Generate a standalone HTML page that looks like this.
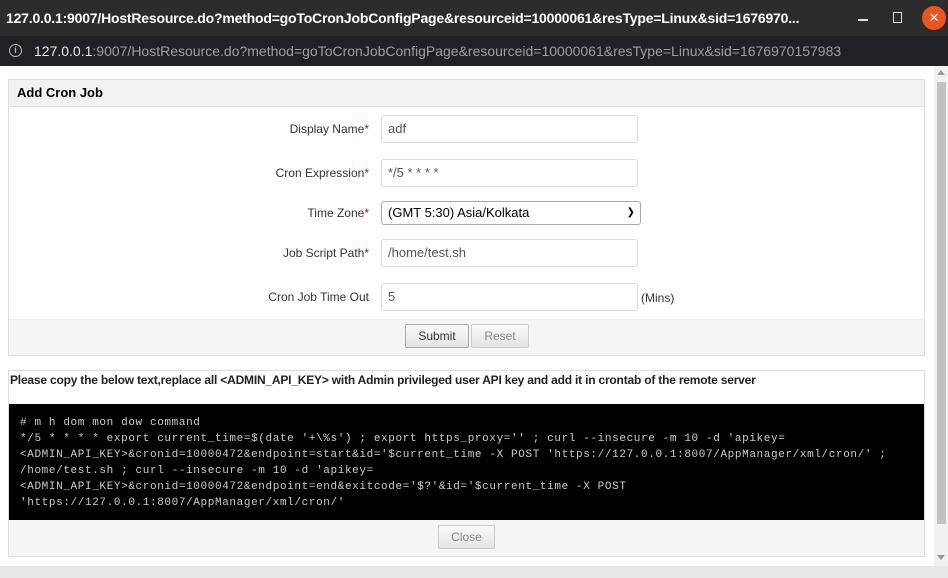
<!DOCTYPE html><html><head><style>
*{box-sizing:border-box;margin:0;padding:0}
body{width:948px;height:578px;overflow:hidden;background:#e8e8e8;font-family:"Liberation Sans",sans-serif;position:relative}
.tb{position:absolute;left:0;top:0;width:948px;height:36px;background:#2c2c2c;color:#fff;font:bold 14px "Liberation Sans",sans-serif;line-height:36px;padding-left:6px;letter-spacing:-0.2px}
.ab{position:absolute;left:0;top:36px;width:948px;height:30px;background:#202124;color:#9aa0a6;font-size:14px;line-height:30px;padding-left:34px}
.ab b{font-weight:normal;color:#e8eaed}
.info{position:absolute;left:9px;top:8px;width:13px;height:13px;border:1.5px solid #bbb;border-radius:50%;font-size:9px;line-height:10px;text-align:center;color:#bbb;font-weight:bold}
.page{position:absolute;left:0;top:66px;width:934px;height:500px;background:#fff}
.sb{position:absolute;left:934px;top:66px;width:14px;height:500px;background:#f1f1f1}
.thumb{position:absolute;left:937px;top:82px;width:9px;height:442px;background:#c1c1c1}
.panel{position:absolute;left:8px;top:79px;width:917px;height:277px;border:1px solid #ddd;background:#fff}
.ph{height:27px;background:#f2f2f2;border-bottom:1px solid #ddd;font-weight:bold;font-size:13px;line-height:26px;padding-left:8px;color:#000}
.lab{position:absolute;right:555px;font-size:12px;color:#333;text-align:right}
.lab i{color:#d00;font-style:normal}
.inp{position:absolute;left:372px;width:257px;height:28px;border:1px solid #ddd;border-radius:3px;font-size:13px;color:#555;padding-left:6px;line-height:26px}
.sel{width:260px;height:24px;border:1px solid #aaa;color:#000;line-height:22px}
.btnbar{position:absolute;left:0;top:239px;width:915px;height:36px;background:#f5f5f5;border-top:1px solid #eee}
.btn{position:absolute;top:4px;height:24px;border:1px solid #aaa;border-radius:2px;background:linear-gradient(#fafafa,#e4e4e4);font-size:12px;text-align:center;line-height:22px}
.box2{position:absolute;left:8px;top:370px;width:917px;height:187px;border:1px solid #ddd;background:#fff}
.msg{font-weight:bold;font-size:12px;padding:2px 0 0 1px;color:#222;letter-spacing:-0.2px}
.code{position:absolute;left:0;top:33px;width:915px;height:116px;background:#000;color:#ccc;font:11px "Liberation Mono",monospace;line-height:16px;padding:11px 0 0 11px;white-space:pre;letter-spacing:0.62px}
.cbar{position:absolute;left:0;top:149px;width:915px;height:36px;background:#f5f5f5}
</style></head><body>
<div class="tb">127.0.0.1:9007/HostResource.do?method=goToCronJobConfigPage&amp;resourceid=10000061&amp;resType=Linux&amp;sid=1676970...
<span style="position:absolute;left:858px;top:19px;width:10px;height:1.5px;background:#ddd"></span>
<span style="position:absolute;left:893px;top:12px;width:9px;height:11px;border:1.5px solid #ddd"></span>
<span style="position:absolute;left:922px;top:6px;width:24px;height:24px;border-radius:50%;background:#e95420;color:#fff;font-size:13px;line-height:24px;text-align:center;font-weight:normal">✕</span></div>
<div class="ab"><span class="info">i</span><b>127.0.0.1</b>:9007/HostResource.do?method=goToCronJobConfigPage&amp;resourceid=10000061&amp;resType=Linux&amp;sid=1676970157983</div>
<div class="page"></div>
<div class="sb"></div><div class="thumb"></div>
<div style="position:absolute;left:937px;top:70px;width:0;height:0;border:4px solid transparent;border-bottom:5px solid #999;border-top:0"></div>
<div style="position:absolute;left:937px;top:555px;width:0;height:0;border:4px solid transparent;border-top:5px solid #999;border-bottom:0"></div>
<div class="panel">
<div class="ph">Add Cron Job</div>
<div class="lab" style="top:42px">Display Name<i>*</i></div>
<div class="inp" style="top:35px">adf</div>
<div class="lab" style="top:86px">Cron Expression<i>*</i></div>
<div class="inp" style="top:79px">*/5 * * * *</div>
<div class="lab" style="top:126px">Time Zone<i>*</i></div>
<div class="inp sel" style="top:121px">(GMT 5:30) Asia/Kolkata<span style="position:absolute;right:5px;top:0;font-size:10px">&#10095;</span></div>
<div class="lab" style="top:166px">Job Script Path<i>*</i></div>
<div class="inp" style="top:159px">/home/test.sh</div>
<div class="lab" style="top:210px">Cron Job Time Out</div>
<div class="inp" style="top:203px">5</div>
<div style="position:absolute;left:632px;top:211px;font-size:12px;color:#333">(Mins)</div>
<div class="btnbar">
<div class="btn" style="left:396px;width:64px;color:#333">Submit</div>
<div class="btn" style="left:462px;width:58px;color:#888;border-color:#ccc">Reset</div>
</div></div>
<div class="box2">
<div class="msg">Please copy the below text,replace all &lt;ADMIN_API_KEY&gt; with Admin privileged user API key and add it in crontab of the remote server</div>
<div class="code"># m h dom mon dow command
*/5 * * * * export current_time=$(date '+\%s') ; export https_proxy='' ; curl --insecure -m 10 -d 'apikey=
&lt;ADMIN_API_KEY&gt;&amp;cronid=10000472&amp;endpoint=start&amp;id='$current_time -X POST 'https://127.0.0.1:8007/AppManager/xml/cron/' ;
/home/test.sh ; curl --insecure -m 10 -d 'apikey=
&lt;ADMIN_API_KEY&gt;&amp;cronid=10000472&amp;endpoint=end&amp;exitcode='$?'&amp;id='$current_time -X POST
'https://127.0.0.1:8007/AppManager/xml/cron/'</div>
<div class="cbar"><div class="btn" style="left:429px;top:5px;width:57px;color:#888;border-color:#ccc">Close</div></div>
</div>
</body></html>
